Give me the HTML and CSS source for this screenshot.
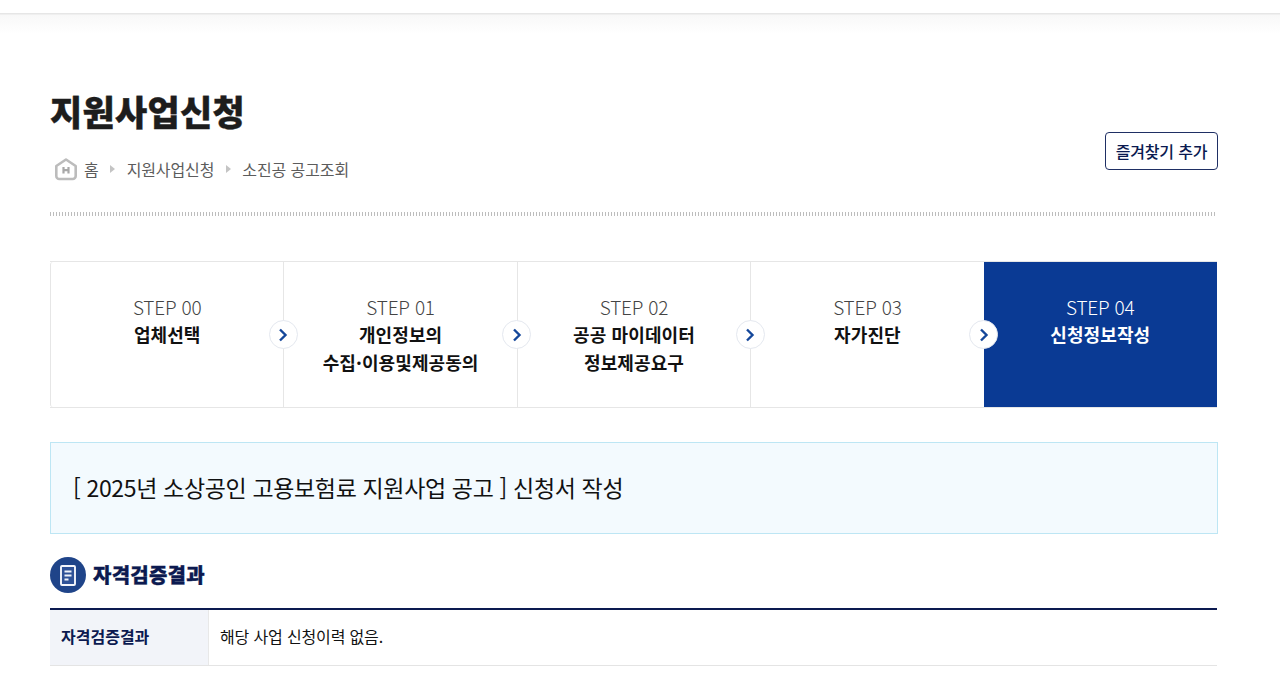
FILE: index.html
```html
<!DOCTYPE html>
<html lang="ko">
<head>
<meta charset="utf-8">
<title>지원사업신청</title>
<link rel="stylesheet" href="styles.css">
</head>
<body>
<header class="topbar"></header>
<main class="page">
  <div class="page-head">
    <div class="page-head-text">
      <h1 class="page-title">지원사업신청</h1>
      <nav class="crumbs">
        <svg class="home-icon" width="24" height="24" viewBox="0 0 24 24"><path d="M12 2.500 L21.700 9 V19 a3 3 0 0 1 -3 3 H5.300 a3 3 0 0 1 -3 -3 V9 Z" fill="none" stroke="#bcbcbc" stroke-width="2.600" stroke-linejoin="round"/><path d="M9.500 10 v6.500 M14.500 10 v6.500 M9.500 13.200 h5" fill="none" stroke="#a8a8a8" stroke-width="2.200"/></svg>
        <span class="crumb crumb-home">홈</span>
        <i class="crumb-sep"></i>
        <span class="crumb">지원사업신청</span>
        <i class="crumb-sep"></i>
        <span class="crumb">소진공 공고조회</span>
      </nav>
    </div>
    <button class="fav-btn">즐겨찾기 추가</button>
  </div>

  <ol class="steps">
    <li class="step"><span class="step-no">STEP 00</span><strong class="step-name">업체선택</strong><span class="step-arrow"><svg width="10" height="14" viewBox="0 0 10 14"><path d="M2 1.500 L7.500 7 L2 12.500" fill="none" stroke="#14479a" stroke-width="2.400"/></svg></span></li>
    <li class="step"><span class="step-no">STEP 01</span><strong class="step-name">개인정보의<br>수집·이용및제공동의</strong><span class="step-arrow"><svg width="10" height="14" viewBox="0 0 10 14"><path d="M2 1.500 L7.500 7 L2 12.500" fill="none" stroke="#14479a" stroke-width="2.400"/></svg></span></li>
    <li class="step"><span class="step-no">STEP 02</span><strong class="step-name">공공 마이데이터<br>정보제공요구</strong><span class="step-arrow"><svg width="10" height="14" viewBox="0 0 10 14"><path d="M2 1.500 L7.500 7 L2 12.500" fill="none" stroke="#14479a" stroke-width="2.400"/></svg></span></li>
    <li class="step"><span class="step-no">STEP 03</span><strong class="step-name">자가진단</strong><span class="step-arrow"><svg width="10" height="14" viewBox="0 0 10 14"><path d="M2 1.500 L7.500 7 L2 12.500" fill="none" stroke="#14479a" stroke-width="2.400"/></svg></span></li>
    <li class="step step-active"><span class="step-no">STEP 04</span><strong class="step-name">신청정보작성</strong></li>
  </ol>

  <div class="notice">[ 2025년 소상공인 고용보험료 지원사업 공고 ] 신청서 작성</div>

  <div class="section-head">
    <span class="section-icon"><svg width="16" height="21" viewBox="0 0 16 21"><rect x="1" y="1" width="14" height="19" rx="1" fill="#2f5297" stroke="#f4f6fb" stroke-width="1.900"/><path d="M4.500 6.500 h7 M4.500 10.500 h7 M4.500 14.500 h4" stroke="#f0f3f9" stroke-width="1.900"/></svg></span>
    <h2 class="section-title">자격검증결과</h2>
  </div>

  <div class="result-row">
    <div class="result-label">자격검증결과</div>
    <div class="result-value">해당 사업 신청이력 없음.</div>
  </div>
</main>
</body>
</html>
```

FILE: styles.css
```css
* { box-sizing: border-box; }
html, body { margin: 0; padding: 0; background: #fff; }
body {
  font-family: "Noto Sans CJK KR", "Noto Sans", sans-serif;
  color: #111;
  height: 684px;
  overflow: hidden;
}
.topbar {
  height: 34px;
  border-top: 13px solid #fff;
  background: linear-gradient(#e6e6e6 0, #e6e6e6 1px, #f8f8f8 2px, #fff 100%);
}
.page {
  width: 1168px;
  margin-left: 50px;
}
.page-head {
  position: relative;
  display: flex;
  justify-content: space-between;
  align-items: flex-start;
  height: 182px;
  padding-top: 54px;
}
.page-head::after {
  content: "";
  position: absolute;
  left: 0;
  right: 2px;
  bottom: 0;
  height: 4px;
  background: repeating-linear-gradient(90deg, #bdbdbd 0 1px, #fff 1px 3px);
}
.page-title {
  margin: 0;
  font-size: 35px;
  line-height: 46px;
  font-weight: 900;
  letter-spacing: 0.3px;
  color: #1d1d1d;
  -webkit-text-stroke: 0.4px #1d1d1d;
}
.crumbs {
  display: flex;
  align-items: center;
  margin-top: 23px;
  padding-left: 4px;
  height: 24px;
  font-size: 16px;
  color: #5c5c5c;
}
.crumb-home { margin-left: 6px; }
.crumb { line-height: 24px; letter-spacing: -0.1px; }
.crumb-sep {
  width: 0;
  height: 0;
  margin: 0 11.500px;
  border-left: 5px solid #c4c4c4;
  border-top: 4px solid transparent;
  border-bottom: 4px solid transparent;
}
.fav-btn {
  margin-top: 44px;
  width: 113px;
  height: 38px;
  padding: 0;
  font: 500 16px "Noto Sans CJK KR", sans-serif;
  letter-spacing: -0.2px;
  color: #0a1a50;
  background: #fff;
  border: 1px solid #1f2f64;
  border-radius: 4px;
}
.steps {
  display: grid;
  grid-template-columns: repeat(5, 1fr);
  list-style: none;
  margin: 45px 0 0;
  padding: 0;
  height: 147px;
  width: 1167px;
  border-top: 1px solid #e6e6e6;
  border-bottom: 1px solid #e6e6e6;
}
.step {
  position: relative;
  display: flex;
  flex-direction: column;
  align-items: center;
  padding-top: 31px;
  border-left: 1px solid #e6e6e6;
  text-align: center;
}
.step:first-child { border-radius: 3px 0 0 3px; }
.step-no {
  font-size: 19px;
  line-height: 27px;
  font-weight: 300;
  letter-spacing: -0.2px;
  color: #444;
}
.step-name {
  font-size: 18px;
  line-height: 28px;
  font-weight: 700;
  letter-spacing: 0.1px;
  color: #111;
}
.step-arrow {
  position: absolute;
  top: 58px;
  right: -14.500px;
  z-index: 1;
  display: flex;
  align-items: center;
  justify-content: center;
  width: 29px;
  height: 29px;
  border: 1px solid #e4e8ef;
  border-radius: 50%;
  background: #fff;
}
.step-active {
  border-left: 0;
  background: #0a3a94;
}
.step-active .step-no { color: #fff; }
.step-active .step-name { color: #fff; }
.notice {
  margin-top: 34px;
  height: 92px;
  padding-left: 22px;
  font-size: 23px;
  line-height: 88px;
  letter-spacing: -0.35px;
  color: #111;
  background: #f3fafe;
  border: 1px solid #bde6f4;
}
.section-head {
  display: flex;
  align-items: center;
  gap: 7px;
  margin-top: 23px;
  height: 36px;
}
.section-icon {
  display: flex;
  align-items: center;
  justify-content: center;
  width: 36px;
  height: 36px;
  border-radius: 50%;
  background: #1f4489;
}
.section-title {
  margin: 0 0 2px;
  font-size: 20px;
  font-weight: 900;
  letter-spacing: 0.25px;
  color: #0c1a50;
  -webkit-text-stroke: 0.3px #0c1a50;
}
.result-row {
  display: flex;
  margin-top: 15px;
  width: 1167px;
  height: 58px;
  border-top: 2px solid #0c1a50;
  border-bottom: 1px solid #e4e4e4;
}
.result-label {
  width: 159px;
  padding-left: 11px;
  font-size: 16px;
  line-height: 53px;
  font-weight: 700;
  color: #0c1a50;
  background: #f2f4f9;
  border-right: 1px solid #e8e8e8;
}
.result-value {
  padding-left: 11px;
  font-size: 16px;
  line-height: 53px;
  letter-spacing: -0.15px;
  color: #111;
}
```
